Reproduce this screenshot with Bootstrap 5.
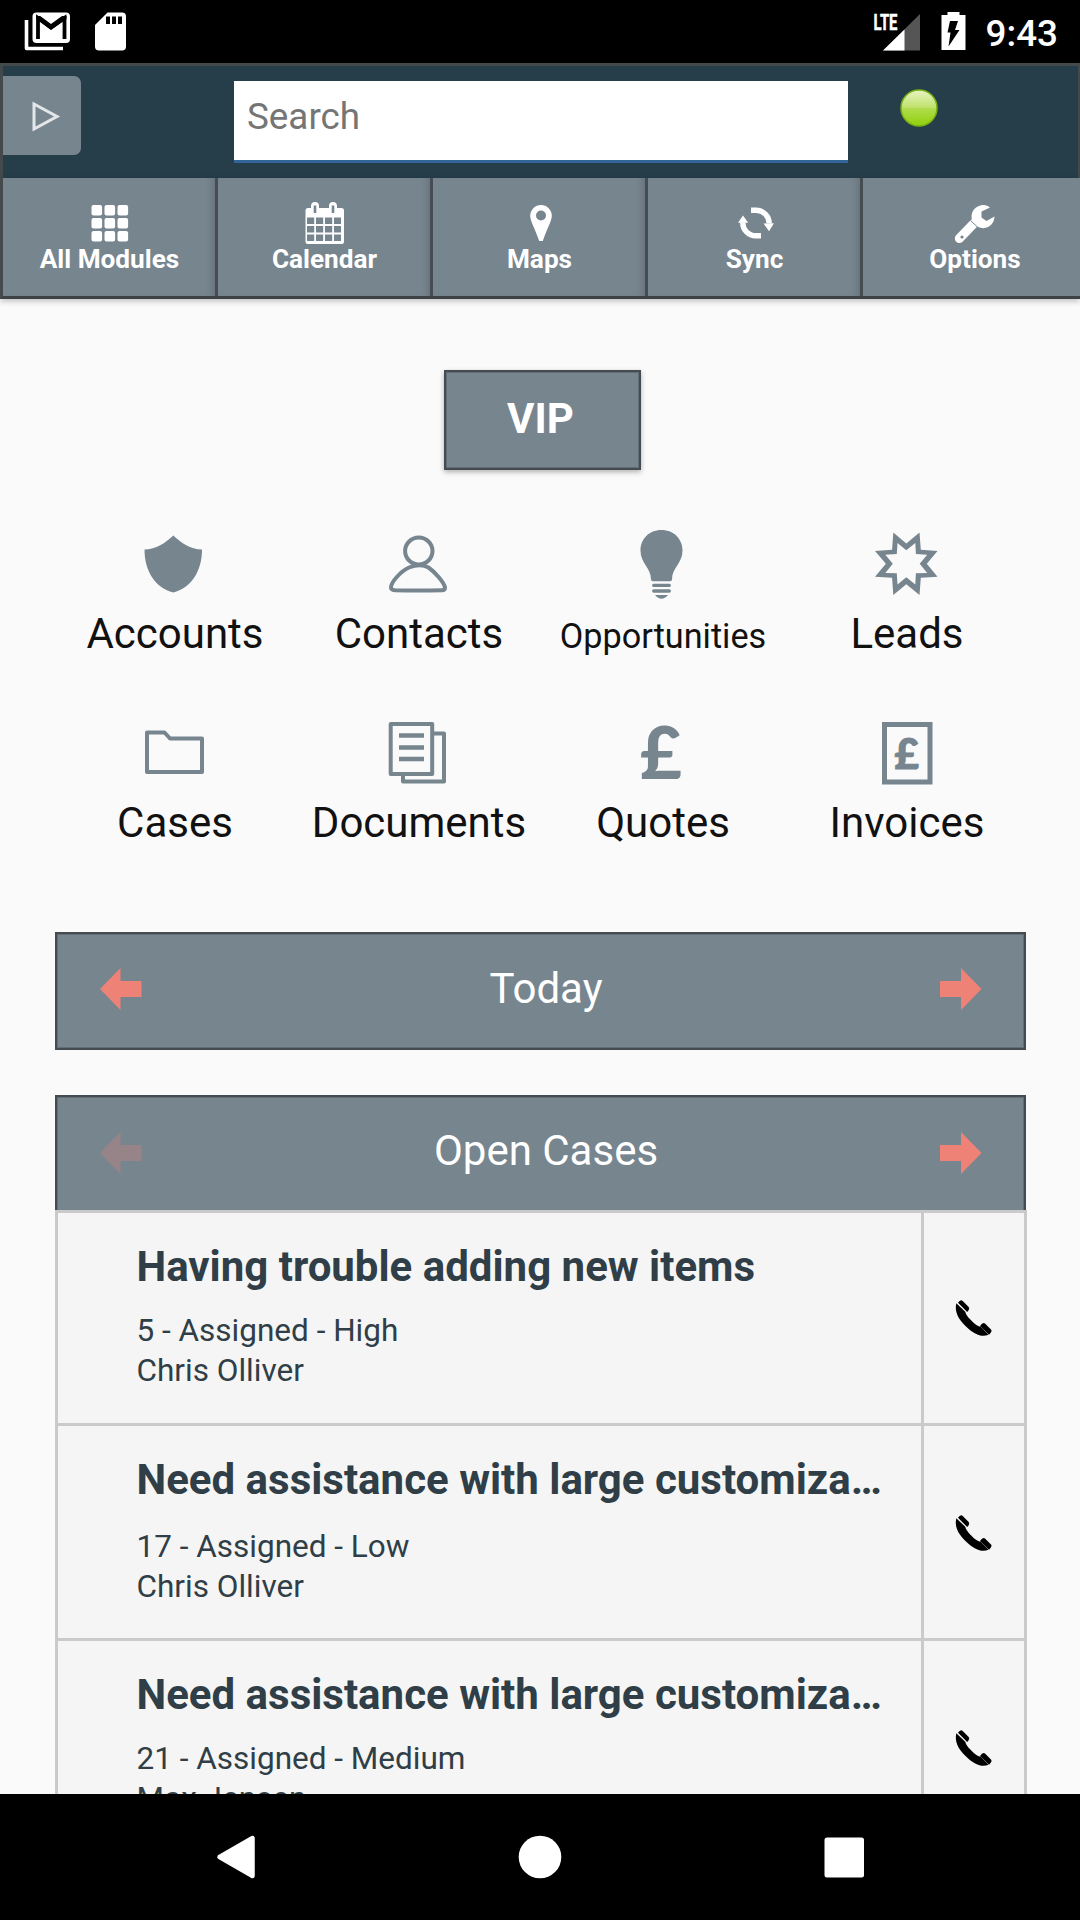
<!DOCTYPE html>
<html lang="en">
<head>
<meta charset="utf-8">
<meta name="viewport" content="width=device-width, initial-scale=1">
<title>Home</title>
<link href="https://cdn.jsdelivr.net/npm/bootstrap@5.3.0/dist/css/bootstrap.min.css" rel="stylesheet">
<style>
:root { --slate:#77858f; --edge:#444c52; --ink:#2f3e47; --coral:#ee8276; --rule:#cacaca; }
body { font-family: Roboto, "Liberation Sans", sans-serif; background:#fafafa; width:1080px; height:1920px; color:#111; }
svg { display:block; overflow:visible; }
.statusbar { height:63px; padding:0 22px 0 22px; }
.clock { font-size:36.8px; font-weight:500; line-height:63px; padding-top:2px; }
.topbar { height:115px; background:#263e4a; border:solid #444a4c; border-width:3px 2px 0 3px; }
.drawer { width:78px; height:79px; margin-top:10px; padding-left:27px; background:var(--slate); border-radius:0 7px 7px 0; }
.searchbox { width:614px; height:82px; margin:15px 0 0 153px; border:0; border-bottom:3px solid #34659a; border-radius:0; font-size:36.8px; padding:0 14px 9px 13px; background:#fff; }
.searchbox::placeholder { color:#757575; opacity:1; }
.dot { margin:22px 0 0 51px; }
.tools { height:121px; background:var(--slate); border-left:3px solid #444a4e; border-bottom:3px solid #3d4246; box-shadow:0 2px 6px rgba(0,0,0,.25); }
.tool { width:215px; border-right:3px solid #454d53; box-shadow:inset -7px 0 8px -6px rgba(0,0,0,.2); color:#fff; font-size:26.2px; font-weight:700; line-height:30px; padding:23px 0 0 1px; }
.tool:last-child { width:223px; border:0; box-shadow:none; }
.tool svg { width:44px; height:44px; }
.tool span { margin-top:-1px; }
.vip { width:197px; height:100px; margin:71px auto 0 443.5px; background:var(--slate); border:2px solid var(--edge); border-radius:0; box-shadow:inset 0 0 0 1px #626d76, 0 2px 5px rgba(0,0,0,.3); color:#fff; font-size:42px; font-weight:700; padding:0 3px 4px 0; }
.modules { margin:59px 51px 0 53px; }
.module { width:244px; height:189px; font-size:42px; line-height:50px; }
.module svg { width:70px; height:70px; margin-bottom:10px; fill:none; stroke:var(--slate); }
.module .solid { fill:var(--slate); stroke:none; }
.compact { font-size:34.2px; line-height:55px; }
.pager { width:971px; height:118px; margin-left:55px; padding:0 42px 0 43px; background:var(--slate); border:2px solid var(--edge); box-shadow:inset 0 0 0 1px #626d76; color:#fff; font-size:42px; line-height:50px; }
.pager span { padding:0 0 5px 10px; }
.pager svg { width:43px; height:43px; margin-bottom:3px; fill:var(--coral); }
.pager .off { opacity:.28; }
.today { margin-top:25px; }
.cases-head { margin-top:45px; height:115px; border-bottom:0; box-shadow:inset 1px 1px 0 #626d76, inset -1px 0 0 #626d76; }
.cases-head svg { margin-bottom:1px; }
.cases { width:972px; margin-left:55px; background:#f5f5f5; border:solid var(--rule); border-width:0 3px; }
.case-item { height:215px; border-top:3px solid var(--rule); color:var(--ink); }
.case-item:first-child { height:213px; }
.case-text { width:863px; padding:29px 34px 0 78.5px; font-size:31.5px; line-height:40px; }
.case-title { font-size:42px; line-height:50px; font-weight:700; margin-bottom:19px; }
.case-item:nth-child(2) .case-title { margin-bottom:22px; }
.call { flex:1; border-left:3px solid var(--rule); padding-top:87.5px; }
.case-item:first-child .call { padding-top:86px; }
.navkeys { height:126px; }
.navkeys svg { width:48px; height:48px; }
.navkeys svg + svg { margin-left:255px; }
</style>
</head>
<body class="d-flex flex-column overflow-hidden m-0">

<div class="statusbar bg-black text-white d-flex flex-shrink-0 justify-content-between">
  <div class="d-flex">
    <svg width="110" height="63" viewBox="22 0 110 63">
      <path d="M26.500 20v28.500h36.500" fill="none" stroke="#fff" stroke-width="3.600" stroke-linejoin="round"/>
      <rect x="32.500" y="12.500" width="37.500" height="30.500" rx="4" fill="#fff"/>
      <path d="M38 39V18L51 27.500 64.500 18V39" fill="none" stroke="#000" stroke-width="3.800"/>
      <path d="M36.200 16h4L51 24l11-8h4.500v3L51 30 36.200 19z" fill="#000"/>
      <path d="M107.500 12.500H122a4 4 0 0 1 4 4V46.500a4 4 0 0 1-4 4H99a4 4 0 0 1-4-4V25z" fill="#fff"/>
      <path d="M106 16.500h4v7.500h-4zM112 16.500h4v7.500h-4zM118 16.500h4v7.500h-4z" fill="#000"/>
    </svg>
  </div>
  <div class="d-flex">
    <svg width="112" height="63" viewBox="875.500 0 112 63">
      <text x="875" y="30" fill="#fff" stroke="#fff" stroke-width=".5" font-size="22.500" font-weight="700" textLength="24" lengthAdjust="spacingAndGlyphs">LTE</text>
      <path d="M921.500 14V50.500H884.500z" fill="#555"/>
      <path d="M906 29.500V50.500H884.500z" fill="#fff"/>
      <path d="M949 12h12v3h6v35h-24V15h6z" fill="#fff"/>
      <path d="M951.500 21h8l-3 9h4.500l-11 16.500 2-14h-3z" fill="#000"/>
    </svg>
    <div class="clock">9:43</div>
  </div>
</div>

<header class="topbar d-flex align-items-start flex-shrink-0">
  <div class="drawer d-flex align-items-center">
    <svg width="32" height="34" viewBox="0 0 32 34"><path d="M4 5l23 12.500L4 30z" fill="none" stroke="#e4e7ea" stroke-width="3"/></svg>
  </div>
  <input class="searchbox form-control" type="text" placeholder="Search" aria-label="Search">
  <svg class="dot" width="40" height="40" viewBox="0 0 40 40">
    <defs>
      <linearGradient id="gl" x1="0" y1="0" x2="0" y2="1"><stop offset="0" stop-color="#e9f4c5"/><stop offset=".48" stop-color="#bfe26c"/><stop offset=".52" stop-color="#b0dc4c"/><stop offset="1" stop-color="#8fd00a"/></linearGradient>
    </defs>
    <circle cx="20" cy="20" r="18" fill="url(#gl)" stroke="#76b012" stroke-width="1.500"/>
  </svg>
</header>

<nav class="tools d-flex flex-shrink-0">
  <div class="tool d-flex flex-column align-items-center flex-shrink-0">
    <svg viewBox="88.500 201 44 44" fill="#fff"><g id="r3"><rect x="92" y="205" width="10.600" height="10.600" rx="2"/><rect x="105" y="205" width="10.600" height="10.600" rx="2"/><rect x="118" y="205" width="10.600" height="10.600" rx="2"/></g><use href="#r3" y="13"/><use href="#r3" y="26"/></svg>
    <span>All Modules</span>
  </div>
  <div class="tool d-flex flex-column align-items-center flex-shrink-0">
    <svg viewBox="303 201 44 44"><rect x="305.500" y="208" width="38.500" height="36" rx="2.500" fill="#fff"/><path d="M311 213v-7a4 4 0 0 1 8 0v7zM329 213v-7a4 4 0 0 1 8 0v7z" fill="#fff"/><path d="M315 205.500v7.500M333 205.500v7.500" stroke="#77858f" stroke-width="2.600"/><path d="M307 217.500h7.200v6.500H307zM316 217.500h7.200v6.500H316zM325 217.500h7.200v6.500H325zM334 217.500h7v6.500h-7zM307 226h7.200v6.500H307zM316 226h7.200v6.500H316zM325 226h7.200v6.500H325zM334 226h7v6.500h-7zM307 234.500h7.200v6.500H307zM316 234.500h7.200v6.500H316zM325 234.500h7.200v6.500H325zM334 234.500h7v6.500h-7z" fill="#77858f"/></svg>
    <span>Calendar</span>
  </div>
  <div class="tool d-flex flex-column align-items-center flex-shrink-0">
    <svg viewBox="518 201 44 44"><path d="M541 205a10.800 10.800 0 0 1 10.800 10.800c0 5-4 11-9 25.200h-3.600c-5-14.200-9-20.200-9-25.200A10.800 10.800 0 0 1 541 205zm0 5.500a5 5 0 1 0 0 10 5 5 0 0 0 0-10z" fill="#fff"/></svg>
    <span>Maps</span>
  </div>
  <div class="tool d-flex flex-column align-items-center flex-shrink-0">
    <svg viewBox="733 201 44 44"><path d="M751 210.300h5a13 13 0 0 1 13.200 13.200M761 235.800h-5a13 13 0 0 1-13.200-13.500" fill="none" stroke="#fff" stroke-width="5.400"/><path d="M763.500 223.500l10.500-.3-5 8zM738 222.800h10.200L743 215.500z" fill="#fff"/></svg>
    <span>Sync</span>
  </div>
  <div class="tool d-flex flex-column align-items-center flex-shrink-0">
    <svg viewBox="953.500 201 44 44"><path d="M959.800 238.500l15-15.500" stroke="#fff" stroke-width="9" stroke-linecap="round"/><path d="M990.500 207.500a11.500 11.500 0 1 0 4.500 9l-8 4.500-5-3.500v-6z" fill="#fff"/><path d="M971 220.500l7.500 7" stroke="#77858f" stroke-width="1"/><circle cx="962.500" cy="237" r="1.600" fill="#77858f"/></svg>
    <span>Options</span>
  </div>
</nav>

<button class="vip btn flex-shrink-0" type="button">VIP</button>

<section class="modules d-flex flex-wrap flex-shrink-0">
  <div class="module d-flex flex-column align-items-center">
    <svg viewBox="140 529 70 70"><path class="solid" d="M173.300 535.500c8 7.500 17 14 28.700 14 0 22-11 38.500-28.700 43-17.700-4.500-28.800-21-28.800-43 11.700 0 20.800-6.500 28.800-14z"/></svg>
    <span>Accounts</span>
  </div>
  <div class="module d-flex flex-column align-items-center">
    <svg viewBox="384 529 70 70" stroke-width="4"><ellipse cx="418.800" cy="551" rx="13.700" ry="13.500"/><path d="M409 567.500c-8 3.500-18 14.500-18 20 0 2 1.500 2.500 4 2.700q23 .6 47 0c2 0 3-.8 3-2.700-1-5-10-15.500-16.500-20q-8-4.500-19.500 0z"/></svg>
    <span>Contacts</span>
  </div>
  <div class="module d-flex flex-column align-items-center">
    <svg viewBox="628 529 70 70"><path class="solid" d="M661.500 530c12.500 0 21 9 21 20.500 0 13-10.500 17-10.500 29q0 1.700-2 1.700h-17q-2 0-2-1.700c0-12-10.500-16-10.500-29 0-11.500 8.500-20.500 21-20.500zM655 595h13q-6.500 7.500-13 0zM653.800 583.700h15.400a1.700 1.700 0 0 1 0 3.400h-15.400a1.700 1.700 0 0 1 0-3.400zM653.800 589.200h15.400a1.700 1.700 0 0 1 0 3.500h-15.400a1.700 1.700 0 0 1 0-3.500z"/></svg>
    <span class="compact">Opportunities</span>
  </div>
  <div class="module d-flex flex-column align-items-center">
    <svg viewBox="872 529 70 70"><path class="solid" fill-rule="evenodd" d="M893.300 532.500l13 11 13.200-11 1.300 17.200 16.700 1.300-10.700 12.700 10.700 13-16.700 1.100-1.300 17.200-13.200-10.800-13 10.800-1.200-17.200-17.100-1.100 10.900-13-10.900-12.700 17.100-1.300zM897.500 543l-.7 11-11.500.7 7.500 9-7.500 9.200 11.500.4.700 11.200 8.800-7.300 9 7.300.6-11.200 11.300-.4-7.500-9.200 7.500-9-11.300-.7-.6-11-9 7.300z"/></svg>
    <span>Leads</span>
  </div>
  <div class="module d-flex flex-column align-items-center">
    <svg viewBox="140 718 70 70" stroke-width="4" stroke-linejoin="round"><path d="M147 732.500h17.500l5.500 6h32v33.500h-55z"/></svg>
    <span>Cases</span>
  </div>
  <div class="module d-flex flex-column align-items-center">
    <svg viewBox="384 718 70 70" stroke-width="4" stroke-linejoin="round"><path d="M390.700 724h41.500v50h-41.500zM433 733.500h11v48h-41v-7"/><path d="M399 735.500h25M399 747.500h25M399 759h25" stroke-width="4.500"/></svg>
    <span>Documents</span>
  </div>
  <div class="module d-flex flex-column align-items-center">
    <svg viewBox="628 718 70 70"><text class="solid" x="661" y="779" text-anchor="middle" font-family="Lato" font-weight="900" font-size="72">£</text></svg>
    <span>Quotes</span>
  </div>
  <div class="module d-flex flex-column align-items-center">
    <svg viewBox="872 718 70 70" stroke-width="5"><rect x="884.500" y="724.500" width="45.500" height="57.500"/><text x="906.700" y="768.500" text-anchor="middle" font-family="Lato" font-weight="900" font-size="42" fill="#77858f" stroke-width="1">£</text></svg>
    <span>Invoices</span>
  </div>
</section>

<div class="pager today d-flex flex-shrink-0 align-items-center justify-content-between">
  <svg viewBox="0 0 43 43"><path d="M0 21L20.500 0V13H41.500V29H20.500V42z"/></svg>
  <span>Today</span>
  <svg viewBox="0 0 43 43"><path d="M42.500 21L22 0V13H1V29H22V42z"/></svg>
</div>

<div class="pager cases-head d-flex flex-shrink-0 align-items-center justify-content-between">
  <svg class="off" viewBox="0 0 43 43"><path d="M0 21L20.500 0V13H41.500V29H20.500V42z"/></svg>
  <span>Open Cases</span>
  <svg viewBox="0 0 43 43"><path d="M42.500 21L22 0V13H1V29H22V42z"/></svg>
</div>

<main class="cases flex-fill overflow-hidden">
  <div class="case-item d-flex">
    <div class="case-text flex-shrink-0">
      <div class="case-title text-truncate">Having trouble adding new items</div>
      <div>5 - Assigned - High</div>
      <div>Chris Olliver</div>
    </div>
    <div class="call d-flex justify-content-center">
      <svg width="38" height="38" viewBox="0 0 38 38"><g id="handset"><path d="M1.300 4.300L10.500 13c-.5 3 11 15 15 14.500l8 8.300C27 38.500 20 36 11 27.500 2.500 19.500-.5 12 1.300 4.300z"/><path d="M3 3.800q2.500-4 4.700-1.800l6 6q1.500 2-1.500 5zM25 27q3-4.500 5-2.500l6 6q1.700 1.800-2 5.200z"/></g></svg>
    </div>
  </div>
  <div class="case-item d-flex">
    <div class="case-text flex-shrink-0">
      <div class="case-title text-nowrap">Need assistance with large customiza…</div>
      <div>17 - Assigned - Low</div>
      <div>Chris Olliver</div>
    </div>
    <div class="call d-flex justify-content-center">
      <svg width="38" height="38" viewBox="0 0 38 38"><use href="#handset"/></svg>
    </div>
  </div>
  <div class="case-item d-flex">
    <div class="case-text flex-shrink-0">
      <div class="case-title text-nowrap">Need assistance with large customiza…</div>
      <div>21 - Assigned - Medium</div>
      <div>Max Jensen</div>
    </div>
    <div class="call d-flex justify-content-center">
      <svg width="38" height="38" viewBox="0 0 38 38"><use href="#handset"/></svg>
    </div>
  </div>
</main>

<footer class="navkeys bg-black d-flex flex-shrink-0 align-items-center justify-content-center">
  <svg viewBox="213 1833 48 48"><path d="M252.500 1838v38L219.500 1857z" fill="#fff" stroke="#fff" stroke-width="4.500" stroke-linejoin="round"/></svg>
  <svg viewBox="516 1833 48 48"><circle cx="540" cy="1857" r="21.300" fill="#fff"/></svg>
  <svg viewBox="819 1833 48 48"><rect x="824.500" y="1837.500" width="39.500" height="40" rx="2.500" fill="#fff"/></svg>
</footer>

<script src="https://cdn.jsdelivr.net/npm/bootstrap@5.3.0/dist/js/bootstrap.bundle.min.js"></script>
</body>
</html>
